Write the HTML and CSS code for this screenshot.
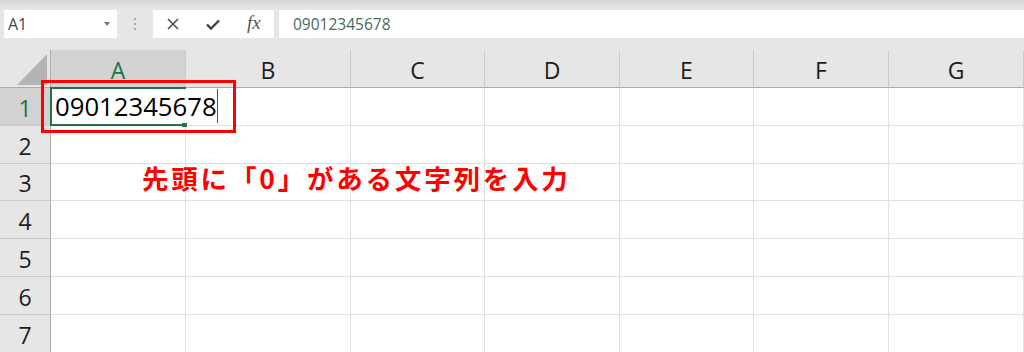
FILE: index.html
```html
<!DOCTYPE html>
<html>
<head>
    <title>Excel - 先頭に0がある文字列</title>
    <link rel="stylesheet" href="styles.css">
</head>
<body>
    <div class="toolbar">
        <div class="namebox">
            <span>A1</span>
            <span class="arrow"></span>
        </div>
        <div class="grip"><i></i><i></i><i></i></div>
        <div class="fxbox">
            <svg class="icon-cancel" width="12" height="12" viewBox="0 0 12 12">
                <path d="M1 1 L11 11 M11 1 L1 11" stroke="#505050" stroke-width="1.6" fill="none"/>
            </svg>
            <svg class="icon-enter" width="14" height="11" viewBox="0 0 14 11">
                <path d="M1 5.5 L5 9.5 L13 1.5" stroke="#404040" stroke-width="2.4" fill="none"/>
            </svg>
            <span class="fx">fx</span>
        </div>
        <div class="formula">09012345678</div>
    </div>

    <div class="sheet">
        <div class="grid">
            <!-- header row -->
            <div class="corner">
                <svg width="50" height="37" viewBox="0 0 50 37">
                    <polygon points="17,35 47,35 47,4" fill="#b4b4b4"/>
                </svg>
            </div>
            <div class="colhead active">A</div>
            <div class="colhead">B</div>
            <div class="colhead">C</div>
            <div class="colhead">D</div>
            <div class="colhead">E</div>
            <div class="colhead">F</div>
            <div class="colhead">G</div>

            <div class="rowhead active">1</div>
            <div class="cell a1">09012345678</div>
            <div class="cell"></div><div class="cell"></div><div class="cell"></div>
            <div class="cell"></div><div class="cell"></div><div class="cell"></div>

            <div class="rowhead">2</div>
            <div class="cell"></div><div class="cell"></div><div class="cell"></div><div class="cell"></div>
            <div class="cell"></div><div class="cell"></div><div class="cell"></div>

            <div class="rowhead">3</div>
            <div class="cell"></div><div class="cell"></div><div class="cell"></div><div class="cell"></div>
            <div class="cell"></div><div class="cell"></div><div class="cell"></div>

            <div class="rowhead">4</div>
            <div class="cell"></div><div class="cell"></div><div class="cell"></div><div class="cell"></div>
            <div class="cell"></div><div class="cell"></div><div class="cell"></div>

            <div class="rowhead">5</div>
            <div class="cell"></div><div class="cell"></div><div class="cell"></div><div class="cell"></div>
            <div class="cell"></div><div class="cell"></div><div class="cell"></div>

            <div class="rowhead">6</div>
            <div class="cell"></div><div class="cell"></div><div class="cell"></div><div class="cell"></div>
            <div class="cell"></div><div class="cell"></div><div class="cell"></div>

            <div class="rowhead">7</div>
            <div class="cell"></div><div class="cell"></div><div class="cell"></div><div class="cell"></div>
            <div class="cell"></div><div class="cell"></div><div class="cell"></div>
        </div>

        <!-- annotations over the sheet -->
        <div class="caret"></div>
        <div class="callout"></div>
        <p class="note">先頭に「0」がある文字列を入力</p>
    </div>
</body>
</html>
```

FILE: styles.css
```css
body {
    margin: 0;
    width: 1024px;
    height: 352px;
    overflow: hidden;
    background-color: #ffffff;
    font-family: "Open Sans", "Noto Sans CJK JP", sans-serif;
}
.toolbar {
    height: 50px;
    box-sizing: border-box;
    padding: 10px 0 0 4px;
    display: flex;
    align-items: flex-start;
    background: linear-gradient(#d6d6d6, #e6e6e6 8px);
}
.namebox {
    width: 113px;
    height: 28px;
    box-sizing: border-box;
    padding: 0 7px 0 4px;
    background-color: #ffffff;
    display: flex;
    align-items: center;
    justify-content: space-between;
    font-size: 16px;
    color: #444444;
}
.arrow {
    width: 0;
    height: 0;
    border-left: 3.5px solid transparent;
    border-right: 3.5px solid transparent;
    border-top: 4px solid #777777;
}
.grip {
    width: 36px;
    height: 28px;
    display: flex;
    flex-direction: column;
    align-items: center;
    justify-content: center;
    gap: 3px;
}
.grip i {
    width: 2px;
    height: 2px;
    background-color: #a8a8a8;
}
.fxbox {
    width: 121px;
    height: 28px;
    margin-right: 5px;
    box-sizing: border-box;
    padding-left: 14px;
    background-color: #ffffff;
    display: flex;
    align-items: center;
    gap: 27px;
}
.fx {
    font-family: "Liberation Serif", serif;
    font-style: italic;
    font-size: 19px;
    color: #555555;
    margin-top: -2px;
}
.formula {
    flex: 1;
    height: 28px;
    box-sizing: border-box;
    padding-left: 14px;
    background-color: #ffffff;
    display: flex;
    align-items: center;
    font-size: 15.5px;
    color: #4a6a5e;
}
.sheet {
    position: relative;
}
.grid {
    display: grid;
    grid-template-columns: 51px 135px 165px 134px 135px 134px 135px 135px;
    grid-template-rows: 38px 38px 38px 37px 38px 38px 38px 38px;
}
.grid > div {
    box-sizing: border-box;
}
.corner {
    background-color: #e6e6e6;
    border-right: 1px solid #ababab;
    border-bottom: 1px solid #ababab;
}
.corner svg {
    display: block;
}
.colhead {
    background-color: #e6e6e6;
    border-right: 1px solid #cacaca;
    border-bottom: 1px solid #ababab;
    display: flex;
    align-items: center;
    justify-content: center;
    padding-top: 2px;
    font-size: 23px;
    color: #1e1e1e;
}
.rowhead {
    background-color: #e6e6e6;
    border-right: 1px solid #ababab;
    border-bottom: 1px solid #cacaca;
    display: flex;
    align-items: center;
    justify-content: center;
    padding-top: 2px;
    font-size: 23px;
    color: #1e1e1e;
}
.colhead.active,
.rowhead.active {
    background-color: #d2d2d2;
    color: #217346;
}
.cell {
    border-right: 1px solid #e1e1e1;
    border-bottom: 1px solid #e1e1e1;
}
.a1 {
    position: relative;
    border-right-color: transparent;
    padding-left: 4px;
    display: flex;
    align-items: center;
    white-space: nowrap;
    font-size: 25.7px;
    color: #000000;
}
.a1::before {
    content: "";
    position: absolute;
    top: -1px;
    left: -1px;
    right: -1px;
    bottom: -1px;
    border: 2px solid #217346;
    border-right: none;
}
.a1::after {
    content: "";
    position: absolute;
    right: -2px;
    bottom: -2px;
    width: 5px;
    height: 4px;
    background-color: #217346;
}
.caret {
    position: absolute;
    left: 217px;
    top: 39px;
    width: 1px;
    height: 34px;
    background-color: #555555;
}
.callout {
    position: absolute;
    left: 41px;
    top: 30px;
    width: 195px;
    height: 53px;
    box-sizing: border-box;
    border: 3px solid #ff0000;
}
.note {
    position: absolute;
    left: 142px;
    top: 115px;
    margin: 0;
    font-family: "Noto Sans CJK JP", sans-serif;
    font-weight: 700;
    font-size: 26.5px;
    line-height: 1;
    letter-spacing: 2.8px;
    color: #ff0000;
    white-space: nowrap;
}
```
